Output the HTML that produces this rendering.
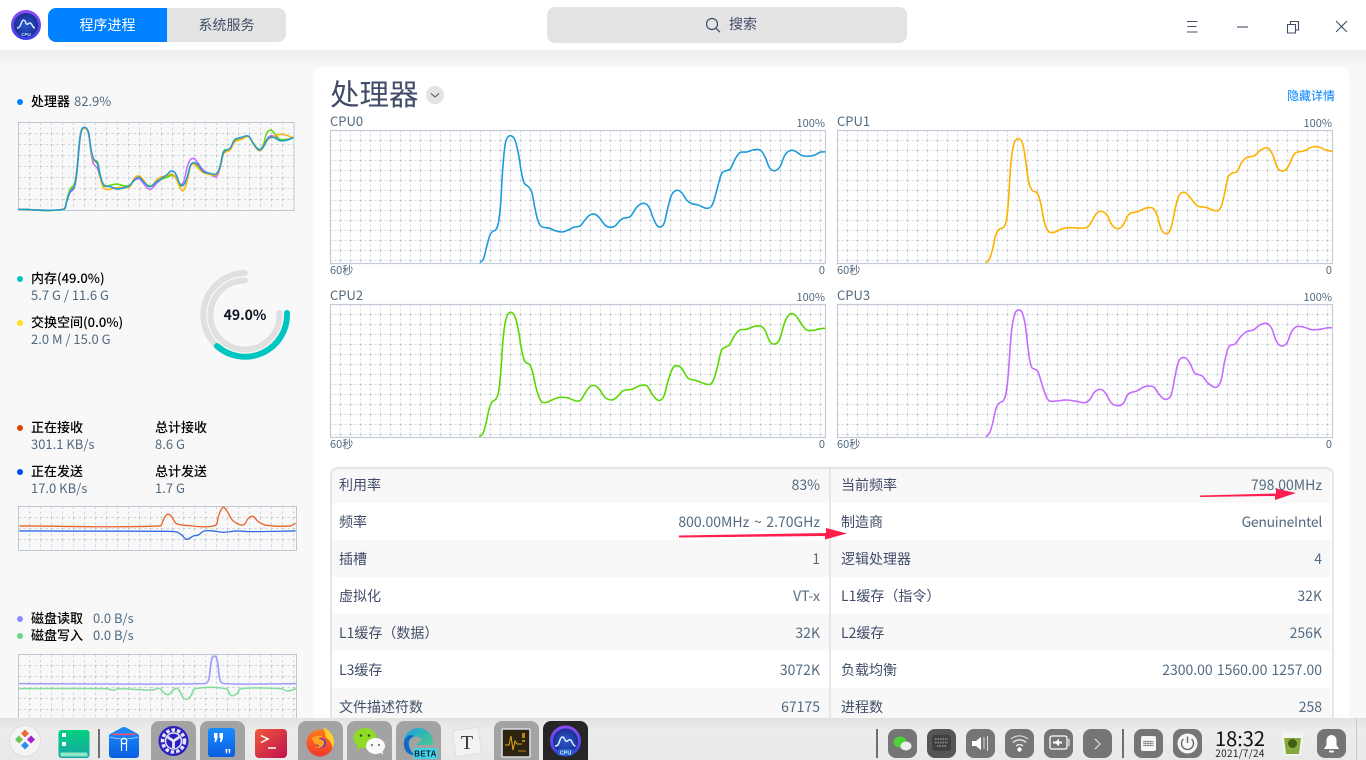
<!DOCTYPE html>
<html lang="zh"><head><meta charset="utf-8"><title>系统监视器</title>
<style>
html,body{margin:0;padding:0;width:1366px;height:760px;overflow:hidden;background:#f8f8f8}
body{position:relative;font-family:"Noto Sans CJK SC","Liberation Sans",sans-serif;color:#414d68}
.a{position:absolute;white-space:nowrap;line-height:1}
svg{position:absolute;left:0;top:0}
#bar{position:absolute;left:0;top:0;width:1366px;height:50px;background:#fff}
#shade{position:absolute;left:0;top:50px;width:1366px;height:18px;background:linear-gradient(#ececec,#f8f8f8)}
#card{position:absolute;left:313px;top:67px;width:1036px;height:660px;background:#fff;border-radius:9px}
.tab{position:absolute;top:8px;height:34px;line-height:34px;text-align:center;font-size:14px;width:119px}
.k{font-size:13px;color:#000;font-weight:500}
.v{font-size:13px;color:#526a7f}
.row{position:absolute;left:331px;width:1000px;height:37px}
.l,.r{position:absolute;font-size:14px;line-height:37px;white-space:nowrap;margin-top:1px}
.l{color:#414d68}.r{color:#526a7f;text-align:right}
.s{font-size:11px;color:#526a7f;margin-top:1px}
.c{font-size:13px;color:#526a7f}
#dock{position:absolute;left:0;top:718px;width:1366px;height:42px;background:linear-gradient(#e2e2e2,#ececec 30%,#e9e9e9)}
</style></head><body>
<div id="shade"></div>
<div id="bar"></div>
<div id="card"></div>

<div class="tab" style="left:48px;background:#0081ff;color:#fff;border-radius:8px 0 0 8px">程序进程</div>
<div class="tab" style="left:167px;background:#e3e3e3;color:#414d68;border-radius:0 8px 8px 0">系统服务</div>
<div class="a" style="left:547px;top:7px;width:360px;height:36px;background:#e3e3e3;border-radius:8px"></div>
<div class="a" style="left:729px;top:17px;font-size:14px;color:#414d68">搜索</div>

<!-- sidebar -->
<div class="a k" style="left:31px;top:94px">处理器</div><div class="a v" style="left:74px;top:94px">82.9%</div>
<div class="a k" style="left:31px;top:271px">内存(49.0%)</div><div class="a v" style="left:31px;top:288px">5.7 G / 11.6 G</div>
<div class="a k" style="left:31px;top:315px">交换空间(0.0%)</div><div class="a v" style="left:31px;top:332px">2.0 M / 15.0 G</div>
<div class="a" style="left:205px;top:308px;width:80px;text-align:center;font-size:14px;font-weight:700;color:#0b1220">49.0%</div>
<div class="a k" style="left:31px;top:420px">正在接收</div><div class="a v" style="left:31px;top:437px">301.1 KB/s</div>
<div class="a k" style="left:155px;top:420px">总计接收</div><div class="a v" style="left:155px;top:437px">8.6 G</div>
<div class="a k" style="left:31px;top:464px">正在发送</div><div class="a v" style="left:31px;top:481px">17.0 KB/s</div>
<div class="a k" style="left:155px;top:464px">总计发送</div><div class="a v" style="left:155px;top:481px">1.7 G</div>
<div class="a k" style="left:31px;top:611px">磁盘读取</div><div class="a v" style="left:93px;top:611px">0.0 B/s</div>
<div class="a k" style="left:31px;top:628px">磁盘写入</div><div class="a v" style="left:93px;top:628px">0.0 B/s</div>

<!-- main head -->
<div class="a" style="left:330px;top:79px;font-size:29.500px;color:#414d68">处理器</div>
<div class="a" style="left:1287px;top:90px;font-size:12px;color:#0081ff">隐藏详情</div>

<div class="a c" style="left:330px;top:114px">CPU0</div><div class="a s" style="left:725px;width:100px;text-align:right;top:117px">100%</div>
<div class="a s" style="left:330px;top:264px">60秒</div><div class="a s" style="left:725px;width:100px;text-align:right;top:264px">0</div>
<div class="a c" style="left:837px;top:114px">CPU1</div><div class="a s" style="left:1232px;width:100px;text-align:right;top:117px">100%</div>
<div class="a s" style="left:837px;top:264px">60秒</div><div class="a s" style="left:1232px;width:100px;text-align:right;top:264px">0</div>
<div class="a c" style="left:330px;top:288px">CPU2</div><div class="a s" style="left:725px;width:100px;text-align:right;top:291px">100%</div>
<div class="a s" style="left:330px;top:438px">60秒</div><div class="a s" style="left:725px;width:100px;text-align:right;top:438px">0</div>
<div class="a c" style="left:837px;top:288px">CPU3</div><div class="a s" style="left:1232px;width:100px;text-align:right;top:291px">100%</div>
<div class="a s" style="left:837px;top:438px">60秒</div><div class="a s" style="left:1232px;width:100px;text-align:right;top:438px">0</div>

<!-- table -->
<div class="row" style="top:466px;background:#f8f8f8;border-radius:8px 8px 0 0"></div>
<div class="row" style="top:540px;background:#f8f8f8"></div>
<div class="row" style="top:614px;background:#f8f8f8"></div>
<div class="row" style="top:688px;background:#f8f8f8"></div>
<div class="a" style="left:330px;top:467px;width:1000px;height:270px;border:2px solid #e4e6e9;border-radius:8px"></div>
<div class="a" style="left:829px;top:467px;width:2px;height:270px;background:#e4e6e9"></div>

<div class="l" style="left:339px;top:466px">利用率</div><div class="r" style="right:546px;top:466px">83%</div>
<div class="l" style="left:841px;top:466px">当前频率</div><div class="r" style="right:44px;top:466px">798.00MHz</div>
<div class="l" style="left:339px;top:503px">频率</div><div class="r" style="right:546px;top:503px;word-spacing:1.500px">800.00MHz ~ 2.70GHz</div>
<div class="l" style="left:841px;top:503px">制造商</div><div class="r" style="right:44px;top:503px;letter-spacing:-.3px">GenuineIntel</div>
<div class="l" style="left:339px;top:540px">插槽</div><div class="r" style="right:546px;top:540px">1</div>
<div class="l" style="left:841px;top:540px">逻辑处理器</div><div class="r" style="right:44px;top:540px">4</div>
<div class="l" style="left:339px;top:577px">虚拟化</div><div class="r" style="right:546px;top:577px">VT-x</div>
<div class="l" style="left:841px;top:577px">L1缓存（指令）</div><div class="r" style="right:44px;top:577px">32K</div>
<div class="l" style="left:339px;top:614px">L1缓存（数据）</div><div class="r" style="right:546px;top:614px">32K</div>
<div class="l" style="left:841px;top:614px">L2缓存</div><div class="r" style="right:44px;top:614px">256K</div>
<div class="l" style="left:339px;top:651px">L3缓存</div><div class="r" style="right:546px;top:651px">3072K</div>
<div class="l" style="left:841px;top:651px">负载均衡</div><div class="r" style="right:44px;top:651px;word-spacing:1px">2300.00 1560.00 1257.00</div>
<div class="l" style="left:339px;top:688px">文件描述符数</div><div class="r" style="right:546px;top:688px">67175</div>
<div class="l" style="left:841px;top:688px">进程数</div><div class="r" style="right:44px;top:688px">258</div>

<svg width="1366" height="718" viewBox="0 0 1366 718" fill="none" style="height:718px">
<defs>
<pattern id="g10" width="10" height="10" patternUnits="userSpaceOnUse"><path d="M0 0V10M0 0H10" stroke="#aab5c2" stroke-width="1" stroke-dasharray="2 2"/></pattern>
<pattern id="g11" width="11" height="11" patternUnits="userSpaceOnUse"><path d="M0 0V11M0 0H11" stroke="#aab5c2" stroke-width="1" stroke-dasharray="2.5 2.5"/></pattern>
<linearGradient id="cp" x1="0" y1="0" x2="0" y2="1"><stop offset="0" stop-color="#8a4cf5"/><stop offset="1" stop-color="#3b3fe8"/></linearGradient>
<radialGradient id="cb"><stop offset="0" stop-color="#2d5ad0"/><stop offset="1" stop-color="#1a2a8a"/></radialGradient>
</defs>

<!-- app icon -->
<circle cx="26" cy="25" r="13.500" fill="url(#cb)" stroke="url(#cp)" stroke-width="3"/>
<path d="M17 28c2 0 3-1 4-4 1-3 2-5 4-3 1 2 1 4 3 3 2-2 3-1 4 1 1 2 2 3 3 3" stroke="#dff4ff" stroke-width="1.400"/>
<text x="26" y="36" text-anchor="middle" font-size="4.500" font-weight="700" fill="#bfe6ff" font-family="Liberation Sans">CPU</text>

<!-- search -->
<circle cx="712" cy="24" r="5.500" stroke="#414d68" stroke-width="1.200"/><path d="M716 28.200l4 4" stroke="#414d68" stroke-width="1.300"/>

<!-- window controls -->
<g stroke="#414d68" stroke-width="1.100">
<path d="M1187 21.500h10.500M1187.500 26.500h9M1187 32h10.500"/>
<path d="M1237 27h11"/>
<path d="M1287.500 24.500h8v8.500h-8zM1290.500 24.500v-3h8v8.500h-3"/>
<path d="M1336 21l11 11M1347 21l-11 11"/>
</g>

<!-- dropdown -->
<circle cx="435" cy="95" r="9" fill="#e3e3e3"/><path d="M431 93.500l4 3.500 4-3.500" stroke="#414d68" stroke-width="1"/>

<!-- sidebar dots -->
<circle cx="20" cy="102" r="3" fill="#0081ff"/>
<circle cx="20" cy="279" r="3" fill="#00c5c0"/>
<circle cx="20" cy="323" r="3" fill="#fedf19"/>
<circle cx="20" cy="428" r="3" fill="#e14300"/>
<circle cx="20" cy="472" r="3" fill="#004dff"/>
<circle cx="20" cy="619" r="3" fill="#8f88ff"/>
<circle cx="20" cy="636" r="3" fill="#6ad787"/>

<!-- sidebar chart cpu -->
<g transform="translate(18.500 122.500)"><rect width="275.500" height="88" fill="url(#g11)"/><rect width="275.500" height="88" stroke="#bcc8d4" stroke-width="1"/></g>
<g transform="scale(.3333)" stroke-width="4.500" stroke-linejoin="round">
<polyline stroke="#c66bff" points="55,628 190,628 200,605 210,578 222,566 230,525 238,440 245,392 255,384 265,400 272,450 280,490 292,505 300,530 312,556 330,560 350,566 375,561 390,555 405,540 418,537 430,550 450,568 470,550 485,538 500,530 513,525 525,528 540,553 550,548 562,500 572,478 582,476 595,490 610,510 630,522 648,530 660,505 672,458 690,447 705,422 725,415 745,410 760,432 778,452 790,442 805,412 820,408 840,420 860,420 880,412"/>
<polyline stroke="#58d800" points="55,628 190,628 200,600 210,568 222,555 230,515 238,430 245,392 255,384 265,396 272,445 280,478 292,485 300,520 312,558 330,556 350,552 375,558 390,555 405,535 418,530 430,543 450,558 470,545 485,538 500,532 513,527 525,530 540,558 550,555 562,535 572,498 582,490 595,498 610,517 630,522 648,525 660,502 672,452 690,447 705,422 725,412 745,410 760,430 778,448 790,435 800,400 812,390 825,402 840,418 860,418 880,415"/>
<polyline stroke="#ffb100" points="55,628 190,628 200,605 210,572 222,562 230,520 238,430 245,390 255,384 265,398 272,445 280,480 292,490 300,530 312,565 330,568 350,563 375,563 390,560 405,533 418,528 430,540 450,560 470,540 485,530 500,528 513,522 525,530 540,562 550,572 562,540 572,498 582,492 595,505 610,518 630,523 648,525 660,505 672,460 690,450 705,425 725,418 745,410 760,432 778,452 790,440 805,418 820,410 840,403 860,406 880,414"/>
<polyline stroke="#1c9bdb" points="55,628 190,628 200,605 210,575 222,562 230,520 238,430 245,388 255,382 265,395 272,440 280,475 292,490 300,525 312,555 330,560 350,567 375,563 390,555 405,538 418,532 430,545 450,560 470,545 485,535 500,525 513,513 525,518 540,552 550,556 562,530 572,495 582,488 595,495 610,515 630,520 648,522 660,500 672,455 690,445 705,418 725,412 745,408 760,430 778,450 790,440 805,415 820,412 840,422 860,421 880,412"/>
</g>

<!-- memory ring -->
<g stroke-width="6" stroke-linecap="round">
<path d="M245 273A42 42 0 0 0 217 346" stroke="#e0e0e0"/>
<path d="M245 280.500A34.500 34.500 0 1 0 279.400 313" stroke="#e0e0e0"/>
<path d="M287 313A42 42 0 0 1 217 346" stroke="#00c5c0"/>
</g>

<!-- network chart -->
<g transform="translate(18.500 506.500)"><rect width="278" height="44" fill="url(#g11)"/><rect width="278" height="44" stroke="#bcc8d4"/></g>
<g transform="translate(0 250) scale(.3333)" stroke-linejoin="round" stroke-width="4">
<polyline stroke="#e8632c" points="58,828 480,828 490,810 503,793 515,800 528,820 555,826 645,827 655,800 665,776 672,772 685,790 700,813 730,825 745,805 758,799 775,815 800,826 870,828 887,820"/>
<polyline stroke="#2f6ee8" points="58,843 490,844 530,846 545,855 560,868 580,858 595,855 612,843 640,843 670,847 710,843 750,845 887,843"/>
</g>

<!-- disk chart -->
<g transform="translate(18.500 654.500)"><rect width="278" height="64" fill="url(#g11)"/><rect width="278" height="64" stroke="#bcc8d4"/></g>
<g transform="translate(0 600) scale(.3827 .3333)" stroke-linejoin="round" stroke-width="4.500">
<polyline stroke="#a29cff" points="50,251 535,251 545,240 552,185 560,168 568,185 575,240 585,251 775,251"/>
<polyline stroke="#83dc9c" points="50,266 280,266 295,271 310,266 380,270 400,270 415,265 430,280 440,284 455,268 465,266 480,295 490,297 500,285 510,266 590,266 605,287 620,280 630,266 735,266 750,273 775,266"/>
</g>

<!-- cpu charts -->
<g transform="translate(330.500 130.500)"><rect width="495" height="133" fill="url(#g10)"/><rect width="495" height="133" stroke="#c3ccd6" stroke-width="1.200"/></g>
<g transform="translate(837.500 130.500)"><rect width="495" height="133" fill="url(#g10)"/><rect width="495" height="133" stroke="#c3ccd6" stroke-width="1.200"/></g>
<g transform="translate(330.500 304.500)"><rect width="495" height="133" fill="url(#g10)"/><rect width="495" height="133" stroke="#c3ccd6" stroke-width="1.200"/></g>
<g transform="translate(837.500 304.500)"><rect width="495" height="133" fill="url(#g10)"/><rect width="495" height="133" stroke="#c3ccd6" stroke-width="1.200"/></g>

<polyline transform="translate(320 70) scale(.3333)" stroke="#1c9bdb" stroke-width="4.800" stroke-linejoin="round" points="480,578 490,568 500,530 510,495 518,484 527,480 535,460 542,400 548,300 556,220 565,200 575,198 585,210 595,250 605,310 613,340 625,350 635,365 645,415 655,455 665,470 690,475 705,482 725,486 745,480 760,472 780,468 795,450 810,435 825,433 840,445 855,465 870,472 885,468 905,447 930,440 950,412 968,400 985,408 1000,445 1015,470 1030,465 1042,420 1055,375 1070,361 1085,368 1100,390 1115,401 1135,405 1160,415 1175,408 1188,370 1205,310 1215,303 1230,298 1245,268 1260,248 1280,246 1300,240 1320,240 1335,260 1350,295 1365,302 1380,290 1395,255 1410,242 1425,243 1445,256 1465,259 1485,255 1500,247 1516,245"/>
<polyline transform="translate(830 0) scale(.3419 .3333)" stroke="#ffb100" stroke-width="4.800" stroke-linejoin="round" points="455,788 465,780 475,750 485,705 495,688 508,682 516,660 522,600 530,480 540,425 552,416 563,430 572,480 582,550 592,572 605,578 615,605 628,670 640,695 655,697 680,686 700,683 750,683 765,665 780,640 795,634 810,645 825,675 842,686 857,675 875,642 900,635 925,624 945,625 958,650 970,690 985,701 997,685 1010,625 1022,585 1037,577 1055,595 1075,618 1100,622 1125,632 1140,628 1152,590 1165,530 1175,520 1190,515 1205,485 1220,472 1240,468 1260,450 1280,444 1295,465 1310,505 1325,513 1340,500 1360,460 1385,453 1410,441 1430,441 1450,450 1470,454"/>
<polyline transform="translate(320 280) scale(.3333)" stroke="#58d800" stroke-width="4.800" stroke-linejoin="round" points="478,470 488,462 498,430 508,385 517,365 527,358 535,340 542,280 550,170 560,110 572,97 585,110 595,150 605,210 615,245 630,255 640,285 650,330 665,366 680,367 700,358 720,352 745,354 765,362 780,362 795,340 810,320 825,317 840,330 855,352 875,360 890,352 910,332 935,328 960,317 980,317 995,340 1015,361 1030,352 1045,300 1060,262 1072,257 1085,265 1105,295 1130,302 1160,313 1175,310 1190,270 1205,210 1215,202 1228,195 1245,165 1260,150 1280,148 1300,140 1320,138 1335,150 1350,185 1365,192 1378,180 1395,125 1410,102 1425,105 1440,125 1460,150 1480,151 1500,146 1516,145"/>
<polyline transform="translate(830 280) scale(.3333)" stroke="#c66bff" stroke-width="4.800" stroke-linejoin="round" points="468,470 478,460 488,430 498,385 507,370 520,362 528,340 535,280 545,150 555,100 565,90 575,95 585,130 595,210 605,262 622,272 632,300 645,340 657,362 680,363 710,360 740,364 765,368 780,358 795,335 815,329 830,345 845,370 865,377 880,370 895,342 920,333 945,320 970,320 985,340 1005,358 1022,348 1035,290 1048,240 1065,233 1080,250 1095,280 1115,287 1135,310 1158,322 1172,305 1185,240 1198,198 1215,192 1232,170 1250,155 1270,150 1290,135 1310,130 1325,145 1340,185 1355,198 1370,190 1385,155 1400,140 1420,141 1445,149 1470,148 1490,144 1506,143"/>

<!-- red arrows -->
<path d="M1200 495.500L1276 493.500V488.500L1296 493L1275 500V496L1200 497z" fill="#ff1f4f"/>
<path d="M679 535.500L826 533V528L847 533.500L825 539.500V536L679 537.500z" fill="#ff1f4f"/>
</svg>

<!-- dock -->
<div id="dock"></div>
<svg width="1366" height="42" viewBox="0 718 1366 42" fill="none" style="top:718px;height:42px">
<defs>
<linearGradient id="dg" x1="0" y1="0" x2="0" y2="1"><stop offset="0" stop-color="#03d17e"/><stop offset="1" stop-color="#18a6a6"/></linearGradient>
<linearGradient id="bl" x1="0" y1="0" x2="0" y2="1"><stop offset="0" stop-color="#1a8cff"/><stop offset="1" stop-color="#0a5ee0"/></linearGradient>
<linearGradient id="rd" x1="0" y1="0" x2="1" y2="1"><stop offset="0" stop-color="#ee5a3a"/><stop offset="1" stop-color="#c0104f"/></linearGradient>
<linearGradient id="ed" x1="0" y1="0" x2="1" y2="1"><stop offset="0" stop-color="#1b9de2"/><stop offset="1" stop-color="#4fd67a"/></linearGradient>
<linearGradient id="ff" x1="0" y1="0" x2="0" y2="1"><stop offset="0" stop-color="#ff7a1c"/><stop offset="1" stop-color="#f0382a"/></linearGradient>
<linearGradient id="cp2" x1="0" y1="0" x2="0" y2="1"><stop offset="0" stop-color="#8a4cf5"/><stop offset="1" stop-color="#3b3fe8"/></linearGradient>
<radialGradient id="cb2"><stop offset="0" stop-color="#2d5ad0"/><stop offset="1" stop-color="#1a2a8a"/></radialGradient>
</defs>

<!-- launcher -->
<circle cx="25" cy="741" r="15.500" fill="#f4f4f4" stroke="#dcdcdc"/>
<path d="M25 729.500l4 4-4 4-4-4z" fill="#ef6a3a"/><path d="M19 735.500l4 4-4 4-4-4z" fill="#6ec457"/><path d="M31 735.500l4 4-4 4-4-4z" fill="#a321c8"/><path d="M25 741.500l4 4-4 4-4-4z" fill="#2c8cf0"/>

<!-- deepin files -->
<rect x="58.500" y="730" width="31" height="28" rx="3" fill="url(#dg)"/>
<rect x="62" y="733" width="4" height="4" fill="#fff"/><rect x="62" y="742" width="4" height="4" fill="#fff"/>
<rect x="60.500" y="752.500" width="27" height="4" rx="1" fill="#8fe8c8"/>
<rect x="98" y="729" width="2" height="29" fill="#6f6f6f"/>

<!-- app store -->
<path d="M109 736Q109 734.500 111 733.500L122 727.500Q124 726.500 126 727.500L137 733.500Q139 734.500 139 736V755a3 3 0 0 1-3 3H112a3 3 0 0 1-3-3z" fill="url(#bl)"/>
<path d="M113 733.500h22l.5 1.600h-23z" fill="#f0556a"/><path d="M110 737Q124 741 138 737" stroke="#bfe0ff" stroke-width=".8"/>
<circle cx="124" cy="741" r="2.800" stroke="#fff" stroke-width="1.200"/><path d="M121.500 751v-8M126.500 751v-8" stroke="#fff" stroke-width="1.100"/>

<!-- active backgrounds -->
<g fill="#a3a3a3">
<path d="M151 760V729a8 8 0 0 1 8-8h29a8 8 0 0 1 8 8v31z"/>
<path d="M200 760V729a8 8 0 0 1 8-8h29a8 8 0 0 1 8 8v31z"/>
<path d="M298 760V729a8 8 0 0 1 8-8h29a8 8 0 0 1 8 8v31z"/>
<path d="M347 760V729a8 8 0 0 1 8-8h29a8 8 0 0 1 8 8v31z"/>
<path d="M396 760V729a8 8 0 0 1 8-8h29a8 8 0 0 1 8 8v31z"/>
<path d="M494 760V729a8 8 0 0 1 8-8h29a8 8 0 0 1 8 8v31z"/>
</g>
<path d="M543 760V729a8 8 0 0 1 8-8h29a8 8 0 0 1 8 8v31z" fill="#262626"/>

<!-- gear -->
<circle cx="173.500" cy="741" r="15" fill="#2a1fc4"/>
<circle cx="173.500" cy="741" r="11" stroke="#e6e6f5" stroke-width="3.500" stroke-dasharray="3.500 2"/>
<circle cx="173.500" cy="741" r="8" stroke="#e6e6f5" stroke-width="1.500"/>
<path d="M173.500 741v7M173.500 741l-6-4M173.500 741l6-4" stroke="#e6e6f5" stroke-width="2.800"/>

<!-- quotes -->
<rect x="208" y="728" width="27" height="29" rx="3" fill="url(#bl)"/>
<path d="M214 733h3.500v5l-1.500 4h-1.500l.5-4h-1zM219.500 733h3.500v5l-1.500 4h-1.500l.5-4h-1z" fill="#fff"/>
<path d="M225.500 749h1.800v2.500l-.8 2h-.8l.3-2h-.5zM228.500 749h1.800v2.500l-.8 2h-.8l.3-2h-.5z" fill="#fff"/>

<!-- terminal -->
<rect x="255" y="729" width="32" height="29" rx="4" fill="url(#rd)"/>
<path d="M261 735.500l7 3.500-7 3.500" stroke="#fff" stroke-width="1.500"/><path d="M268 748h8" stroke="#fff" stroke-width="1.500"/>

<!-- firefox -->
<circle cx="320" cy="743" r="13.500" fill="url(#ff)"/>
<path d="M323 727c6 3 11 8 11 15 0 2-.5 4-1.500 6-1-6-4-9-7-11 0-4-1-7-2.500-10z" fill="#ffcf2a"/>
<circle cx="321" cy="743" r="5" fill="#5f3bc0"/>
<path d="M312 738c3-2 9-3 11-1-2 0-4 1-4 2 3 0 6 2 5 5-1 3-5 5-9 3 3 0 4-1 4-2-4 0-6-3-7-7z" fill="#ffa020"/>

<!-- wechat -->
<ellipse cx="365" cy="738" rx="11.500" ry="10" fill="#8fdc26"/><path d="M358 745l-2 5 6-3z" fill="#8fdc26"/>
<circle cx="361" cy="735.500" r="1.300" fill="#2f5a10"/><circle cx="369" cy="735.500" r="1.300" fill="#2f5a10"/>
<ellipse cx="375.500" cy="746" rx="9.500" ry="8" fill="#fafafa"/><path d="M380 752l3 3-.5-5z" fill="#fafafa"/>
<circle cx="372" cy="745" r="1.100" fill="#777"/><circle cx="379" cy="745" r="1.100" fill="#777"/>

<!-- edge -->
<path d="M404 742c0-8 7-14 15-14s14 7 14 14v3h-16c0-3 3-4 5-4-1-4-5-5-8-4-4 1-5 4-5 7 0 5 3 9 8 11-7 1-13-5-13-13z" fill="url(#ed)"/>
<path d="M404 742c1-4 4-7 8-7 3 0 1 2-1 3-3 2-3 7-1 11 1 3 3 5 6 6-8 1-13-5-12-13z" fill="#1466c8"/>
<rect x="413.500" y="748" width="24" height="11" rx="1.500" fill="#3fd3e8"/>
<text x="425.500" y="756.500" text-anchor="middle" font-size="8" font-weight="700" fill="#123" font-family="Liberation Sans" letter-spacing=".3">BETA</text>

<!-- typora -->
<rect x="454" y="729" width="26" height="26" rx="1" fill="#f2f2f2" stroke="#dedede" transform="rotate(-8 467 742)"/>
<text x="467" y="749" text-anchor="middle" font-size="20" fill="#333" font-family="Liberation Serif">T</text>

<!-- monitor -->
<rect x="502" y="729" width="28" height="28" rx="1" fill="#2c2410" stroke="#d6dce4" stroke-width="1.600"/>
<path d="M505 745h4l2-9 2 14 2-9 2 3h5" stroke="#e2a51c" stroke-width="1"/>
<path d="M522 733h3v5h-3zM522 740h3v2h-3z" fill="#b38417"/><path d="M518 751h8" stroke="#b38417" stroke-width="1"/>

<!-- cpu -->
<circle cx="565.500" cy="741" r="14" fill="url(#cb2)" stroke="url(#cp2)" stroke-width="3"/>
<path d="M555 746c2.500 0 3.500-1 4.500-4.500 1-3.500 2.500-6 4.500-3.500 1.500 2.500 1.500 4 3.500 3 2-2 3.500-1.500 4.500 1 1 2.500 2 4 3.500 4" stroke="#dff4ff" stroke-width="1.500"/>
<rect x="558" y="749" width="15" height="6.500" rx="1.500" fill="#1f62c8"/>
<text x="565.500" y="754.500" text-anchor="middle" font-size="5.500" font-weight="700" fill="#cfeaff" font-family="Liberation Sans">CPU</text>

<!-- tray -->
<rect x="876" y="729" width="2" height="29" fill="#6f6f6f"/>
<rect x="1122" y="729" width="2" height="29" fill="#6f6f6f"/>
<g fill="#757575">
<rect x="888" y="729" width="29" height="29" rx="8"/>
<rect x="927" y="729" width="29" height="29" rx="8" fill="#555"/>
<rect x="966" y="729" width="29" height="29" rx="8"/>
<rect x="1005" y="729" width="29" height="29" rx="8"/>
<rect x="1044" y="729" width="29" height="29" rx="8"/>
<rect x="1083" y="729" width="29" height="29" rx="8"/>
<rect x="1134" y="729" width="29" height="29" rx="8"/>
<rect x="1173" y="729" width="29" height="29" rx="8"/>
<rect x="1317" y="729" width="29" height="29" rx="8"/>
</g>

<ellipse cx="900" cy="742" rx="6.500" ry="5.500" fill="#4cd137"/><ellipse cx="906" cy="746" rx="5.500" ry="4.500" fill="#eee"/>
<rect x="932" y="735" width="19" height="16" rx="3" fill="#3f3f3f"/>
<path d="M935 739h13M935 742.500h13M937 746h9" stroke="#888" stroke-width="1.800" stroke-dasharray="1.500 1"/>
<path d="M972 741h4l5-4v13l-5-4h-4z" fill="#fff"/><path d="M984 737v12M987.500 736v15" stroke="#ddd" stroke-width="1"/>
<g stroke="#e6e6e6" fill="none"><path d="M1011 739a13 13 0 0 1 17 0" stroke-width="1"/><path d="M1013 742.500a9.500 9.500 0 0 1 13 0" stroke-width="1.500"/><path d="M1016 746a5 5 0 0 1 7 0" stroke-width="1.500"/></g><circle cx="1019.500" cy="749.500" r="2.200" fill="#fff"/>
<rect x="1050" y="736" width="17" height="13" rx="2" stroke="#fff" stroke-width="1.300"/><path d="M1053 741.500h3l3-3v3h3v2h-3v3l-3-3h-3z" fill="#fff"/><path d="M1069 739v7" stroke="#fff" stroke-width="1"/>
<path d="M1095 739l5 5-5 5" stroke="#eee" stroke-width="1"/>
<rect x="1141" y="736" width="15" height="15" rx="2" fill="#f6f6f6"/><path d="M1143.500 741.500h10M1143.500 743.500h10M1143.500 745.500h10" stroke="#555" stroke-width="1.300" stroke-dasharray="1 .6"/>
<circle cx="1187.500" cy="743.500" r="10" fill="#f6f6f6"/><path d="M1183.500 739a6 6 0 1 0 8 0M1187.500 736.500v6.500" stroke="#666" stroke-width="1.400"/>
<text x="1240" y="746" text-anchor="middle" font-size="20" fill="#111" font-family="Noto Sans CJK SC, Liberation Sans, sans-serif">18:32</text>
<text x="1240" y="757" text-anchor="middle" font-size="10" fill="#222" font-family="Noto Sans CJK SC, Liberation Sans, sans-serif" letter-spacing=".3">2021/7/24</text>
<path d="M1281 732h23l-2.500 22a3 3 0 0 1-3 2h-12a3 3 0 0 1-3-2z" fill="#f3f5f2" stroke="#e3e6e2" stroke-width=".5"/>
<path d="M1284 738h17l-2 16h-13z" fill="#87a83c"/><circle cx="1292.500" cy="743.500" r="4.500" fill="#3f5f16"/>
<path d="M1331.500 735a5 5 0 0 1 5 5v5l2.500 4h-15l2.500-4v-5a5 5 0 0 1 5-5z" fill="#fff"/><rect x="1329" y="750.500" width="5" height="2" rx="1" fill="#fff"/>
<path d="M1356.500 718v42" stroke="#c9c9c9"/>
</svg>
<script>
function u(a,b){var x=b[0]-a[0],y=b[1]-a[1],l=Math.hypot(x,y)||1;return [x/l,y/l]}
document.querySelectorAll('polyline').forEach(function(e){
  var n=e.getAttribute('points').trim().split(/\s+/).map(function(s){return s.split(',').map(Number)});
  var d='M'+n[0][0]+' '+n[0][1];
  for(var i=0;i<n.length-1;i++){
    var a=n[Math.max(i-1,0)],b=n[i],c=n[i+1],f=n[Math.min(i+2,n.length-1)];
    var s=Math.hypot(c[0]-b[0],c[1]-b[1])/3,t1=u(a,c),t2=u(b,f);
    d+='C'+(b[0]+t1[0]*s).toFixed(1)+' '+(b[1]+t1[1]*s).toFixed(1)+' '+(c[0]-t2[0]*s).toFixed(1)+' '+(c[1]-t2[1]*s).toFixed(1)+' '+c[0]+' '+c[1];
  }
  var p=document.createElementNS('http://www.w3.org/2000/svg','path');
  p.setAttribute('d',d);
  ['stroke','stroke-width','stroke-linejoin','transform'].forEach(function(k){if(e.hasAttribute(k))p.setAttribute(k,e.getAttribute(k))});
  p.setAttribute('fill','none');
  e.parentNode.replaceChild(p,e);
});
</script>
</body></html>
